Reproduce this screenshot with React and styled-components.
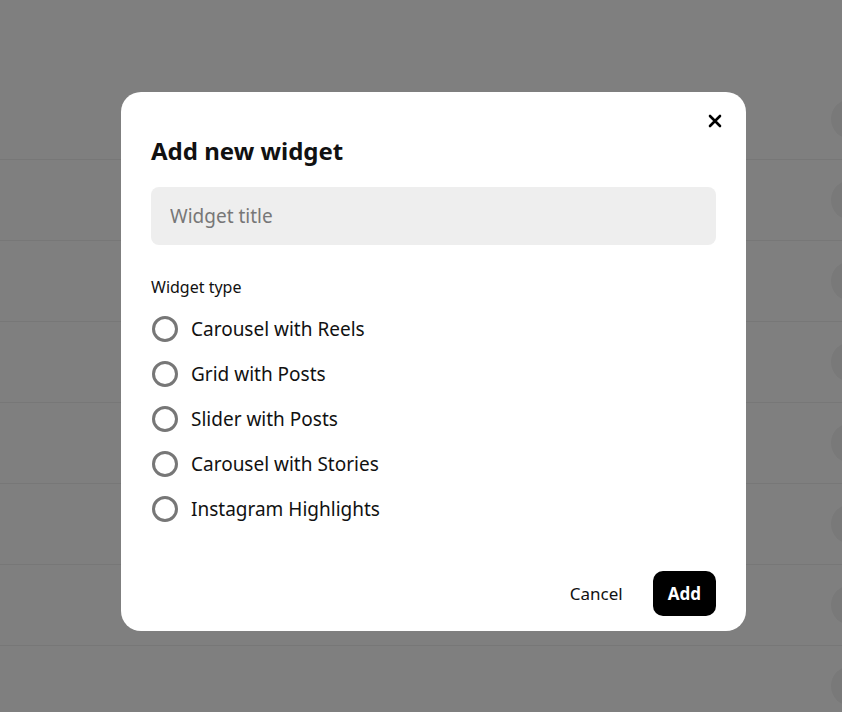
import React from "react";
import styled, { createGlobalStyle } from "styled-components";

const GlobalStyle = createGlobalStyle`
  * { box-sizing: border-box; }
  body {
    margin: 0;
    font-family: "Noto Sans", "Open Sans", sans-serif;
    color: #111;
    background: #fff;
    overflow: hidden;
  }
`;

const widgetTypes = [
  "Carousel with Reels",
  "Grid with Posts",
  "Slider with Posts",
  "Carousel with Stories",
  "Instagram Highlights",
];

const App = () => {
  return (
    <>
      <GlobalStyle />
      <Page>
        {Array.from({ length: 8 }).map((_, i) => (
          <ListRow key={i}>
            <Avatar />
          </ListRow>
        ))}
      </Page>
      <Overlay>
        <Modal>
          <CloseButton aria-label="Close">
            <svg width="14" height="14" viewBox="0 0 14 14">
              <path
                d="M2 2L12 12M12 2L2 12"
                stroke="#000"
                strokeWidth="2.6"
                strokeLinecap="round"
              />
            </svg>
          </CloseButton>
          <Title>Add new widget</Title>
          <TitleInput placeholder="Widget title" />
          <FieldLabel>Widget type</FieldLabel>
          <RadioList>
            {widgetTypes.map((t) => (
              <RadioRow key={t}>
                <RadioCircle type="radio" name="widget-type" />
                <span>{t}</span>
              </RadioRow>
            ))}
          </RadioList>
          <Footer>
            <CancelButton>Cancel</CancelButton>
            <AddButton>Add</AddButton>
          </Footer>
        </Modal>
      </Overlay>
    </>
  );
};

export default App;

const Page = styled.div`
  padding-top: 79px;
  width: 842px;
  height: 712px;
  overflow: hidden;
`;

const ListRow = styled.div`
  height: 81px;
  border-bottom: 1px solid #eeeeee;
  display: flex;
  align-items: center;
  justify-content: flex-end;
`;

const Avatar = styled.div`
  width: 40px;
  height: 40px;
  flex-shrink: 0;
  border-radius: 50%;
  background: #f2f2f2;
  margin-right: -29px;
`;

const Overlay = styled.div`
  position: fixed;
  inset: 0;
  background: rgba(0, 0, 0, 0.5);
  display: flex;
  align-items: flex-start;
  padding: 92px 0 0 121px;
`;

const Modal = styled.div`
  position: relative;
  width: 625px;
  height: 539px;
  background: #fff;
  border-radius: 20px;
  padding: 43px 30px 15px;
  display: flex;
  flex-direction: column;
`;

const CloseButton = styled.button`
  position: absolute;
  top: 18px;
  right: 20px;
  width: 22px;
  height: 22px;
  padding: 0;
  border: none;
  background: none;
  display: flex;
  align-items: center;
  justify-content: center;
  cursor: pointer;
`;

const Title = styled.h2`
  margin: 0;
  font-size: 24px;
  line-height: 32px;
  font-weight: 700;
  color: #111;
`;

const TitleInput = styled.input`
  margin-top: 20px;
  height: 58px;
  width: 100%;
  border: none;
  border-radius: 8px;
  background: #eeeeee;
  padding: 0 19px;
  font-family: inherit;
  font-size: 19px;
  color: #111;
  outline: none;
  &::placeholder {
    color: #777;
  }
`;

const FieldLabel = styled.div`
  margin-top: 31px;
  font-size: 16px;
  line-height: 22px;
  color: #111;
`;

const RadioList = styled.div`
  margin-top: 17px;
  display: flex;
  flex-direction: column;
  gap: 17px;
`;

const RadioRow = styled.label`
  display: flex;
  align-items: center;
  gap: 13px;
  font-size: 19px;
  line-height: 28px;
  color: #111;
  cursor: pointer;
`;

const RadioCircle = styled.input`
  appearance: none;
  margin: 0 0 0 1px;
  width: 26px;
  height: 26px;
  border: 3px solid #777;
  border-radius: 50%;
  background: #fff;
  flex-shrink: 0;
`;

const Footer = styled.div`
  margin-top: auto;
  display: flex;
  justify-content: flex-end;
  align-items: center;
  gap: 16px;
`;

const CancelButton = styled.button`
  border: none;
  background: none;
  padding: 0 14px;
  height: 45px;
  font-family: inherit;
  font-size: 17px;
  color: #111;
  cursor: pointer;
`;

const AddButton = styled.button`
  border: none;
  background: #000;
  color: #fff;
  height: 45px;
  padding: 0 15px;
  border-radius: 10px;
  font-family: inherit;
  font-size: 17px;
  font-weight: 700;
  cursor: pointer;
`;
